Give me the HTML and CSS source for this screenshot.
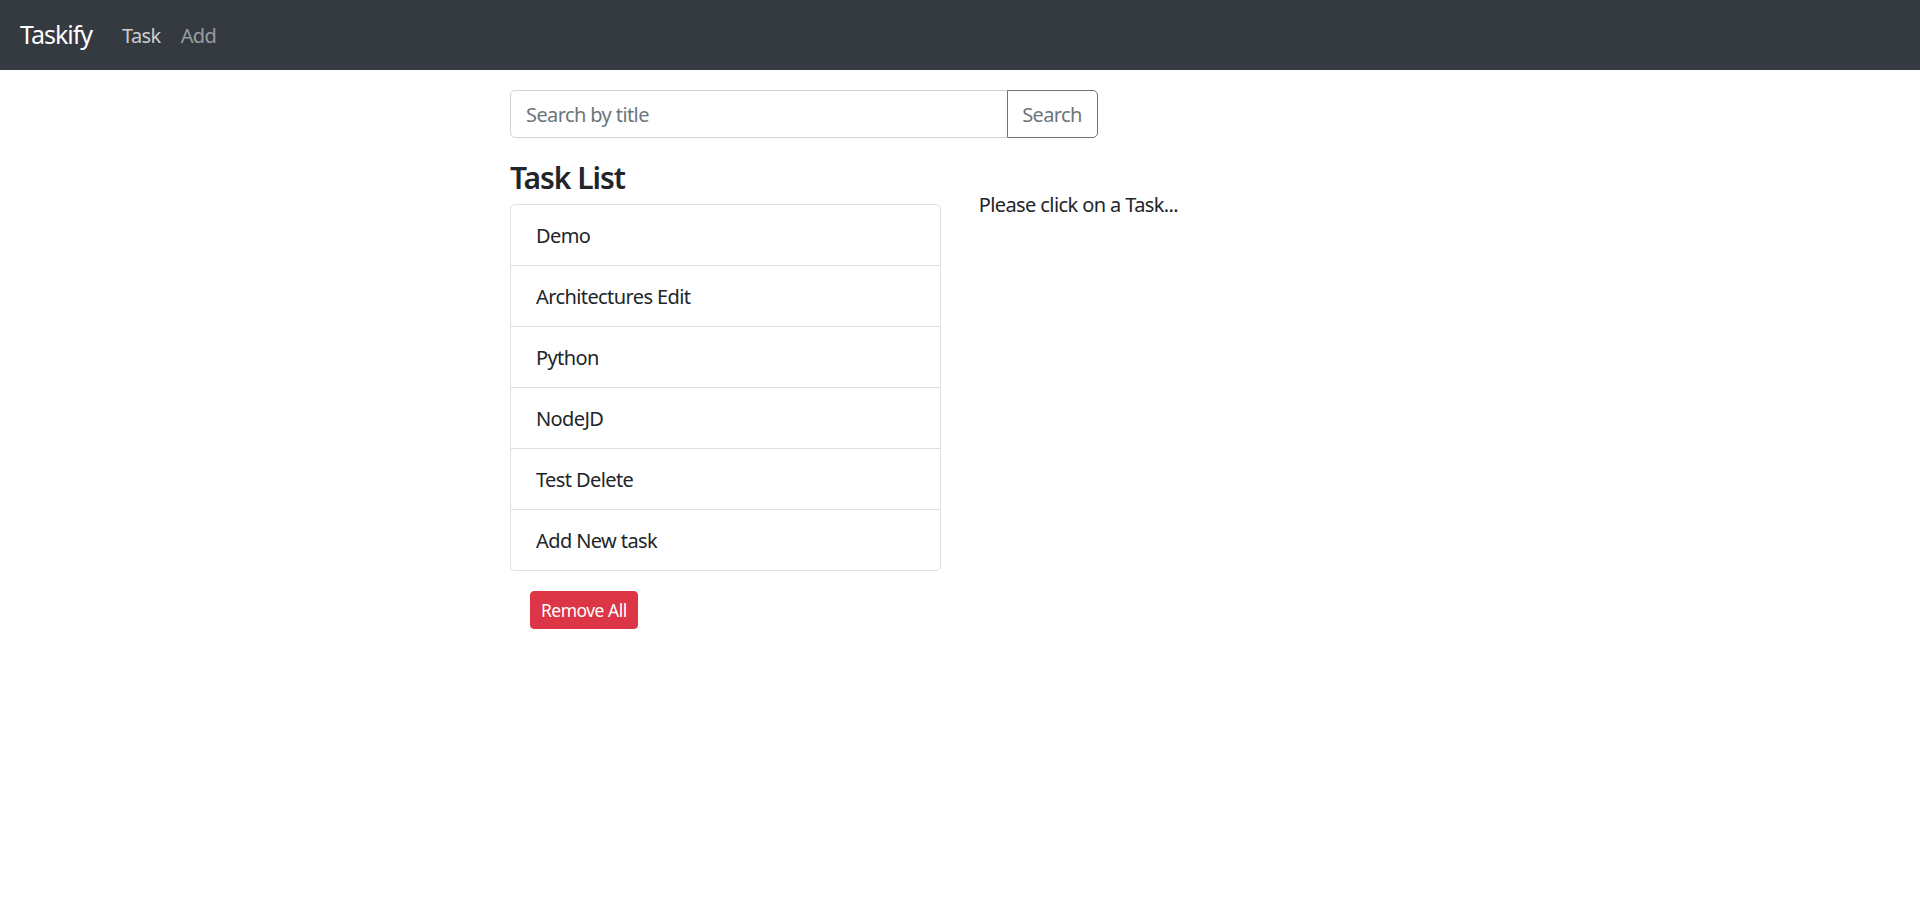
FILE: index.html
```html
<!DOCTYPE html>
<html lang="en">
<head>
<meta charset="utf-8">
<title>Taskify</title>
<link rel="stylesheet" href="styles.css">
</head>
<body>
<nav class="navbar">
  <a class="brand" href="#">Taskify</a>
  <div class="nav">
    <a class="nav-link hover" href="#">Task</a>
    <a class="nav-link" href="#">Add</a>
  </div>
</nav>
<main class="container">
  <div class="list">
    <div class="col-search">
      <div class="input-group">
        <input class="form-control" type="text" placeholder="Search by title">
        <button class="btn-outline" type="button">Search</button>
      </div>
    </div>
    <div class="col-half">
      <h4 class="title">Task List</h4>
      <ul class="list-group">
        <li class="list-item">Demo</li>
        <li class="list-item">Architectures Edit</li>
        <li class="list-item">Python</li>
        <li class="list-item">NodeJD</li>
        <li class="list-item">Test Delete</li>
        <li class="list-item">Add New task</li>
      </ul>
      <button class="btn-danger" type="button">Remove All</button>
    </div>
    <div class="col-half">
      <br>
      <p class="hint">Please click on a Task...</p>
    </div>
  </div>
</main>
</body>
</html>
```
FILE: styles.css
```css
* { box-sizing: border-box; }
html, body { margin: 0; }
body {
  font-family: "Noto Sans", "Open Sans", "Liberation Sans", sans-serif;
  font-size: 20px;
  line-height: 1.5;
  letter-spacing: -0.03em;
  color: #212529;
  background: #fff;
}
.navbar {
  background: #343a40;
  height: 70px;
  padding: 0 20px;
  display: flex;
  align-items: center;
}
.brand {
  color: #fff;
  font-size: 25px;
  text-decoration: none;
  margin-right: 20px;
  line-height: 1.5;
  letter-spacing: -0.04em;
}
.nav { display: flex; }
.nav-link {
  color: rgba(255,255,255,.5);
  text-decoration: none;
  padding: 11px 10px 9px;
  font-size: 20px;
}
.nav-link.hover { color: rgba(255,255,255,.75); }
.container {
  padding-top: 20px;
}
.list {
  max-width: 937.5px;
  margin: 0 auto;
  display: flex;
  flex-wrap: wrap;
}
.col-search {
  flex: 0 0 66.6667%;
  padding: 0 18.75px;
}
.input-group {
  display: flex;
  margin-bottom: 20px;
}
.form-control {
  flex: 1;
  min-width: 0;
  height: 48px;
  border: 1px solid #ced4da;
  border-radius: 5px 0 0 5px;
  padding: 8px 15px 7px;
  font: inherit;
  letter-spacing: inherit;
  color: #495057;
}
.form-control::placeholder { color: #6c757d; }
.btn-outline {
  flex: 0 0 91px;
  height: 48px;
  border: 1px solid #6c757d;
  border-radius: 0 5px 5px 0;
  margin-left: -1px;
  background: #fff;
  color: #6c757d;
  font: inherit;
  letter-spacing: inherit;
  padding: 8px 0 7px;
}
.col-half {
  flex: 0 0 50%;
  padding: 0 18.75px;
}
.title {
  margin: 0 0 10px;
  padding-top: 2px;
  height: 36px;
  font-size: 30px;
  font-weight: 600;
  line-height: 1.2;
  letter-spacing: -0.035em;
}
.list-group {
  list-style: none;
  margin: 0;
  padding: 0;
  border: 1px solid rgba(0,0,0,.125);
  border-radius: 5px;
}
.list-item {
  padding: 16px 25px 14px;
  line-height: 30px;
  border-top: 1px solid rgba(0,0,0,.125);
}
.list-item:first-child { border-top: 0; }
.btn-danger {
  margin: 20px;
  background: #dc3545;
  color: #fff;
  border: 1px solid #dc3545;
  border-radius: 4px;
  font: inherit;
  letter-spacing: -0.03em;
  font-size: 17.5px;
  line-height: 26px;
  padding: 5px 10px;
}
.hint { margin: 0 0 20px; padding-top: 2px; }
```
